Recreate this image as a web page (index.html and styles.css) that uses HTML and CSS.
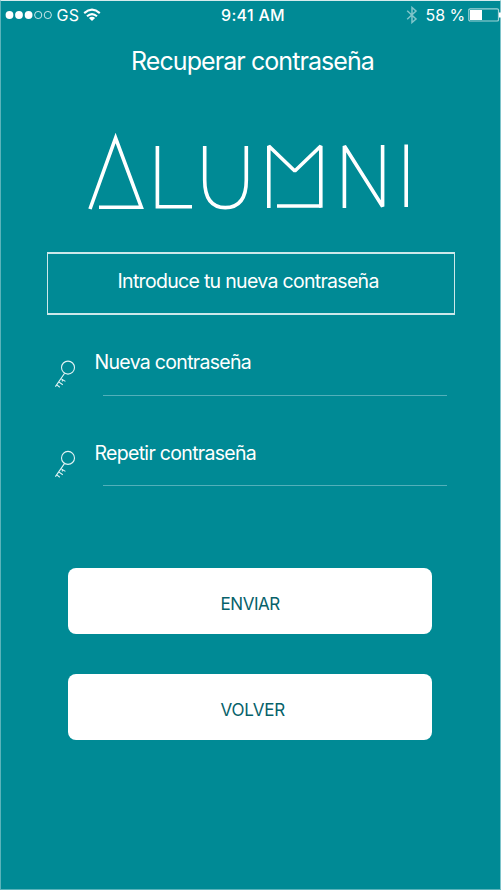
FILE: index.html
```html
<!DOCTYPE html>
<html lang="es">
<head>
<meta charset="utf-8">
<title>Recuperar contraseña</title>
<link rel="stylesheet" href="styles.css">
</head>
<body>
<main class="screen">
  <header class="status">
    <div class="status-left">
      <svg class="signal" width="48" height="10" viewBox="0 0 48 10">
        <g fill="#fff"><circle cx="4.5" cy="5" r="3.9"/><circle cx="14" cy="5" r="3.9"/><circle cx="23.6" cy="5" r="3.9"/></g>
        <g fill="none" stroke="#fff" stroke-width=".8"><circle cx="33.2" cy="5" r="3.6"/><circle cx="42.8" cy="5" r="3.6"/></g>
      </svg>
      <span class="carrier">GS</span>
      <svg class="wifi" width="18" height="14" viewBox="0 0 18 14">
        <g fill="none" stroke="#fff" stroke-width="2.1"><path d="M1.2 5.1Q9 -1.7 16.8 5.1"/><path d="M4 8.3Q9 3.9 14 8.3"/></g>
        <path d="M5.9 9.9Q9 7.5 12.1 9.9L9 13Z" fill="#fff"/>
      </svg>
    </div>
    <span class="clock">9:41 AM</span>
    <div class="status-right">
      <svg class="bluetooth" width="12" height="18" viewBox="0 0 12 18"><path d="M1.2 4.8L10 13L6 16.5V1.5L10 5L1.2 13.2" fill="none" stroke="#fff" stroke-opacity=".5" stroke-width="1.5"/></svg>
      <span class="percent">58 %</span>
      <svg class="battery" width="33" height="14" viewBox="0 0 33 14">
        <rect x=".8" y=".8" width="29.7" height="12.2" rx="1.3" fill="none" stroke="#9fd3d7" stroke-width="1.2"/>
        <rect x="2" y="2" width="12" height="10" fill="#fff"/>
        <path d="M31 4.5h2v5h-2z" fill="#fff"/>
      </svg>
    </div>
  </header>

  <h1 class="title"><span>Recuperar contraseña</span></h1>

  <svg class="logo" role="img" aria-label="Alumni" width="324" height="80" viewBox="86 131 324 80">
    <g fill="none" stroke="#fff" stroke-width="3.6">
      <path d="M90 209L115.6 138L141.3 207.2H99"/>
      <path d="M157.4 146V206.7H192"/>
      <path d="M204.7 146V180C204.7 198 211.5 207.6 225.3 207.6S246.3 198 246.3 180V146"/>
      <g stroke-linejoin="bevel">
        <path d="M268.8 208V146L294.8 171L320.8 146V207.8"/>
        <path d="M344.4 208V146L382.6 206.5V145"/>
      </g>
      <path d="M277 206H321"/>
      <path d="M406.2 144.5V207"/>
    </g>
  </svg>

  <p class="notice"><span>Introduce tu nueva contraseña</span></p>

  <form class="form">
    <label class="field">
      <svg class="key" width="24" height="30" viewBox="0 0 24 30"><g fill="none" stroke="#e2f3f4" stroke-width="1.1"><circle cx="15" cy="8.6" r="6.5"/><path d="M11.6 14.2L2.4 27.6M7.9 19.6L12.4 22.4M5.4 22.6L9.8 25.8M8.9 22.4L10.3 20.6M3.2 25.4L6.8 28.2"/></g></svg>
      <span class="field-body"><span class="label new">Nueva contraseña</span></span>
    </label>
    <label class="field">
      <svg class="key" width="24" height="30" viewBox="0 0 24 30"><g fill="none" stroke="#e2f3f4" stroke-width="1.1"><circle cx="15" cy="8.9" r="6.5"/><path d="M11.6 14.4L2.4 27.6M7.9 19.6L12.4 22.4M5.4 22.6L9.8 25.8M8.9 22.4L10.3 20.6M3.2 25.4L6.8 28.2"/></g></svg>
      <span class="field-body"><span class="label repeat">Repetir contraseña</span></span>
    </label>
    <div class="actions">
      <button type="button" class="button"><span class="send">ENVIAR</span></button>
      <button type="button" class="button"><span class="back">VOLVER</span></button>
    </div>
  </form>
</main>
</body>
</html>
```
FILE: styles.css
```css
* { box-sizing: border-box; }
body {
  margin: 0;
  background: #fff;
  font-family: Inter, "Liberation Sans", sans-serif;
  color: #fff;
}
.screen {
  width: 501px;
  height: 890px;
  display: flex;
  flex-direction: column;
  background: #008a95;
  border: 1px solid #5bb3ba;
  border-top-color: #d5ebed;
  border-right-color: #7fc4ca;
}
.status {
  height: 28px;
  flex: none;
  display: grid;
  grid-template-columns: 220px 1fr auto;
  align-items: center;
  font-size: 16px;
  line-height: 26px;
}
.status-left, .status-right { display: flex; align-items: center; }
.status-left { padding-left: 4px; }
.carrier { margin-left: 3.5px; letter-spacing: .2px; }
.wifi { margin-left: 4px; }
.clock { font-weight: 500; letter-spacing: .3px; }
.status-right { margin-right: -1px; }
.bluetooth { margin-right: 8px; }
.percent { letter-spacing: -.1px; }
.battery { margin-left: 3px; }
.title {
  margin: 15px 0 0;
  padding-left: 130px;
  height: 34px;
  line-height: 34px;
  font-size: 25px;
  font-weight: 400;
  letter-spacing: -.92px;
  white-space: nowrap;
}
.logo { margin: 53px 0 0 85px; flex: none; }
.notice {
  width: 408px;
  height: 63px;
  margin: 41px 0 0 46px;
  padding-left: 69.5px;
  border: solid #cce8ea;
  border-width: 2px 1px;
  line-height: 55px;
  font-size: 19.5px;
  font-weight: 400;
  letter-spacing: -.69px;
  white-space: nowrap;
}
.form { margin: 0 0 0 52px; padding-top: 31px; }
.field { display: flex; height: 90px; }
.key { margin-top: 13px; flex: none; }
.field-body {
  width: 344px;
  height: 50px;
  margin-left: 26px;
  border-bottom: 1px solid #52b0ba;
}
.label {
  display: block;
  margin-left: -8.5px;
  line-height: 32px;
  font-size: 19.5px;
  font-weight: 400;
  letter-spacing: -.69px;
  white-space: nowrap;
}
.repeat { line-height: 34px; letter-spacing: -.69px; }
.actions {
  display: flex;
  flex-direction: column;
  gap: 40px;
  width: 364px;
  margin: 42px 0 0 15px;
}
.button {
  height: 66px;
  padding: 5px 0 0 152.5px;
  border: 0;
  border-radius: 8px;
  background: #fff;
  color: #07616a;
  font: 400 17px Inter, "Liberation Sans", sans-serif;
  text-align: left;
}
.send { letter-spacing: -.45px; }
.back { letter-spacing: -.15px; }
```
